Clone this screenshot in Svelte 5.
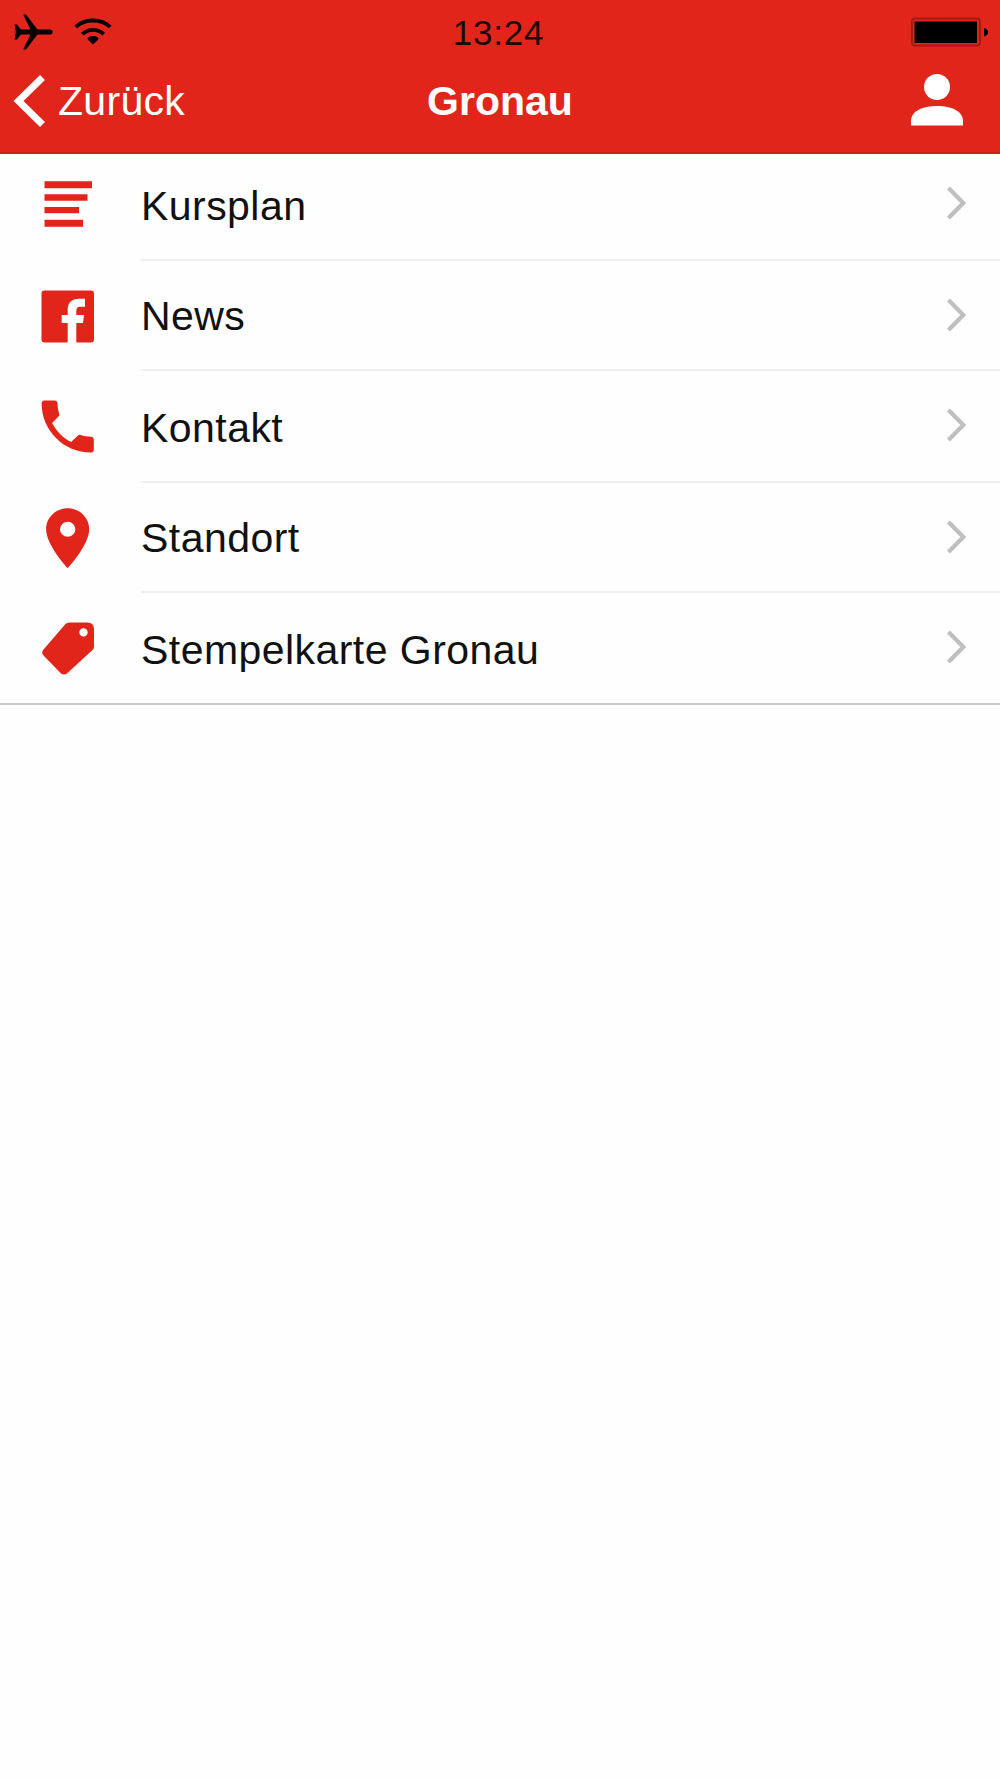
<script lang="ts">
	/**
	 * Studio menu: status bar, navigation bar and list of entries.
	 */
	type Icon = 'list' | 'facebook' | 'phone' | 'pin' | 'tag';

	interface Entry {
		icon: Icon;
		label: string;
	}

	const title = 'Gronau';

	const entries: Entry[] = [
		{ icon: 'list', label: 'Kursplan' },
		{ icon: 'facebook', label: 'News' },
		{ icon: 'phone', label: 'Kontakt' },
		{ icon: 'pin', label: 'Standort' },
		{ icon: 'tag', label: 'Stempelkarte Gronau' }
	];
</script>

<div class="screen">
	<header>
		<div class="status-bar">
			<div class="status-left">
				<svg class="plane" viewBox="0 0 40 38" width="40" height="38">
					<path d="M0.5 11.5H3l3.800 4.900H16.500L9.200 1.500H12L23.500 16.400H35.500c2 0 3.200 1.100 3.200 2.600s-1.200 2.600-3.200 2.600H23.500L12 36.500H9.200L16.500 21.600H6.800L3 26.500H0.500L1.800 19z" />
				</svg>
				<svg class="wifi" viewBox="0 0 38 28" width="38" height="28">
					<path d="M1.800 9.800C11 1.400 27 1.400 36.200 9.800M8.300 17.200C14.500 11.400 23.500 11.400 29.700 17.200" />
					<path class="dot" d="M19 27.500l-4.800-4.500c-1-1.200-.8-2 .2-2.700 2.700-1.800 6.500-1.800 9.200 0 1 .7 1.200 1.500.2 2.700z" />
				</svg>
			</div>
			<span class="time">13:24</span>
			<svg class="battery" viewBox="0 0 80 32" width="80" height="32">
				<rect class="case" x="2" y="2.500" width="68" height="27" rx="3" />
				<rect x="4.500" y="5.500" width="62.500" height="21.500" />
				<path d="M74 12c5.500 1.500 5.500 7 0 8.500z" />
			</svg>
		</div>

		<nav>
			<button class="back">
				<svg viewBox="0 0 34 56" width="34" height="56">
					<path d="M30.500 4.500L6.500 28l24 23.500" />
				</svg>
				<span>Zurück</span>
			</button>
			<h1>{title}</h1>
			<button class="profile" aria-label="Profil">
				<svg viewBox="0 0 54 54" width="54" height="54">
					<circle cx="27" cy="14" r="13" />
					<path d="M1 52.500v-4.500C1 38 13 33 27 33s26 5 26 15v4.500z" />
				</svg>
			</button>
		</nav>
	</header>

	<ul>
		{#each entries as entry}
			<li>
				<svg class="icon" viewBox="0 0 64 64" width="64" height="64">
					{#if entry.icon === 'list'}
						<path d="M8.500 9.200h47.500v7H8.500zM8.500 22.200h43v6.500h-43zM8.500 35h34.500v6.300H8.500zM8.500 47.700h38.500v7H8.500z" />
					{:else if entry.icon === 'facebook'}
						<path transform="translate(0 0.700)" d="M8.500 5.800h46.500a3 3 0 0 1 3 3v46a3 3 0 0 1-3 3H40.300V38.300H47l1-8h-7.700v-4c0-3 1.200-4.300 4-4.300H49v-8h-6c-7.500 0-11.300 4.300-11.300 11v5.300h-6v8h6v19.500H8.500a3 3 0 0 1-3-3v-46a3 3 0 0 1 3-3z" />
					{:else if entry.icon === 'phone'}
						<path
							transform="translate(-3.100 -2.300) scale(2.900)"
							d="M6.620 10.790c1.440 2.830 3.760 5.140 6.590 6.590l2.200-2.200c.27-.27.67-.36 1.020-.24 1.120.37 2.330.57 3.570.57.55 0 1 .45 1 1V20c0 .55-.45 1-1 1-9.390 0-17-7.610-17-17 0-.55.45-1 1-1h3.500c.55 0 1 .45 1 1 0 1.250.2 2.450.57 3.570.11.35.03.74-.25 1.020z"
						/>
					{:else if entry.icon === 'pin'}
						<path
							transform="translate(-5.300 -3.700) scale(3.080 3)"
							d="M12 2C8.130 2 5 5.130 5 9c0 5.250 7 13 7 13s7-7.750 7-13c0-3.870-3.130-7-7-7zm0 9.500a2.500 2.500 0 1 1 0-5 2.500 2.500 0 0 1 0 5z"
						/>
					{:else}
						<path
							fill-rule="evenodd"
							d="M33 6.500H51.500Q58 6.500 58 13V30.500Q58 32.500 56.500 34L31.500 57Q28 60 24.500 57L7.500 39.500Q4.800 36.500 7.500 33.500L29.500 8Q31 6.500 33 6.500zM47.500 12.200a4.200 4.200 0 1 0 0 8.400a4.200 4.200 0 1 0 0-8.400z"
						/>
					{/if}
				</svg>
				<div class="content">
					<span class="label">{entry.label}</span>
					<svg class="chevron" viewBox="0 0 22 36" width="22" height="36">
						<path d="M2.500 3L17.300 18l-14.800 15" />
					</svg>
				</div>
			</li>
		{/each}
	</ul>
</div>

<style>
	:global(body) {
		background: #fefefe;
	}

	.screen {
		min-height: 1778px;
		font-family: 'Liberation Sans', Helvetica, Arial, sans-serif;
		color: #111;
	}

	header {
		box-sizing: border-box;
		height: 154px;
		background: #e1251b;
		border-bottom: 2px solid #c9241a;
	}

	.status-bar {
		display: grid;
		grid-template-columns: 1fr auto 1fr;
		align-items: center;
		height: 64px;
		padding: 0 10px 0 14px;
	}

	.status-left {
		display: flex;
		align-items: center;
		gap: 20px;
	}

	.wifi {
		margin-top: -2px;
		fill: none;
		stroke: #000;
		stroke-width: 3.8;
	}

	.wifi .dot {
		fill: #000;
		stroke: none;
	}

	.time {
		margin: 2px 7px 0 0;
		font-size: 35px;
		line-height: 40px;
		letter-spacing: 0.8px;
		color: #1c0503;
	}

	.battery {
		justify-self: end;
	}

	.battery .case {
		fill: none;
		stroke: #a51a12;
		stroke-width: 2;
	}

	nav {
		display: grid;
		grid-template-columns: 1fr auto 1fr;
		align-items: center;
		height: 73px;
		padding: 0 12px;
		color: #fff;
	}

	button {
		padding: 0;
		border: 0;
		background: none;
		font: inherit;
		color: inherit;
	}

	.back {
		display: flex;
		align-items: center;
		gap: 12px;
		font-size: 41px;
		line-height: 48px;
		letter-spacing: 0.3px;
	}

	.back path {
		fill: none;
		stroke: #fff;
		stroke-width: 7;
	}

	h1 {
		margin: 0;
		font-size: 41px;
		line-height: 48px;
		font-weight: 700;
	}

	.profile {
		display: flex;
		justify-self: end;
		margin: 0 24px 2px 0;
	}

	.profile svg {
		fill: #fff;
	}

	ul {
		margin: 0;
		padding: 0;
		list-style: none;
		border-bottom: 2px solid #c8c7cc;
	}

	li {
		display: flex;
		align-items: flex-end;
		height: 112px;
		padding-left: 36px;
	}

	li:nth-child(even) {
		height: 110px;
	}

	li:first-child {
		height: 107px;
	}

	li:last-child {
		height: 110px;
	}

	.icon {
		flex: none;
		margin: 0 41px 25px 0;
		fill: #e1251b;
	}

	li:nth-child(even) .icon,
	li:last-child .icon {
		margin-bottom: 23px;
	}

	.content {
		display: flex;
		flex: 1;
		align-items: center;
		justify-content: space-between;
		height: 106px;
		padding-right: 32px;
		border-bottom: 2px solid #efeff0;
		box-sizing: border-box;
	}

	li:last-child .content {
		height: 104px;
		border-bottom: 0;
	}

	.label {
		margin-bottom: 2px;
		font-size: 41px;
		line-height: 48px;
		letter-spacing: 0.45px;
	}

	.chevron {
		margin-bottom: 9px;
		fill: none;
		stroke: #bfbfc1;
		stroke-width: 4.2;
	}

	li:nth-child(even) .chevron {
		margin-bottom: 5px;
	}
</style>
